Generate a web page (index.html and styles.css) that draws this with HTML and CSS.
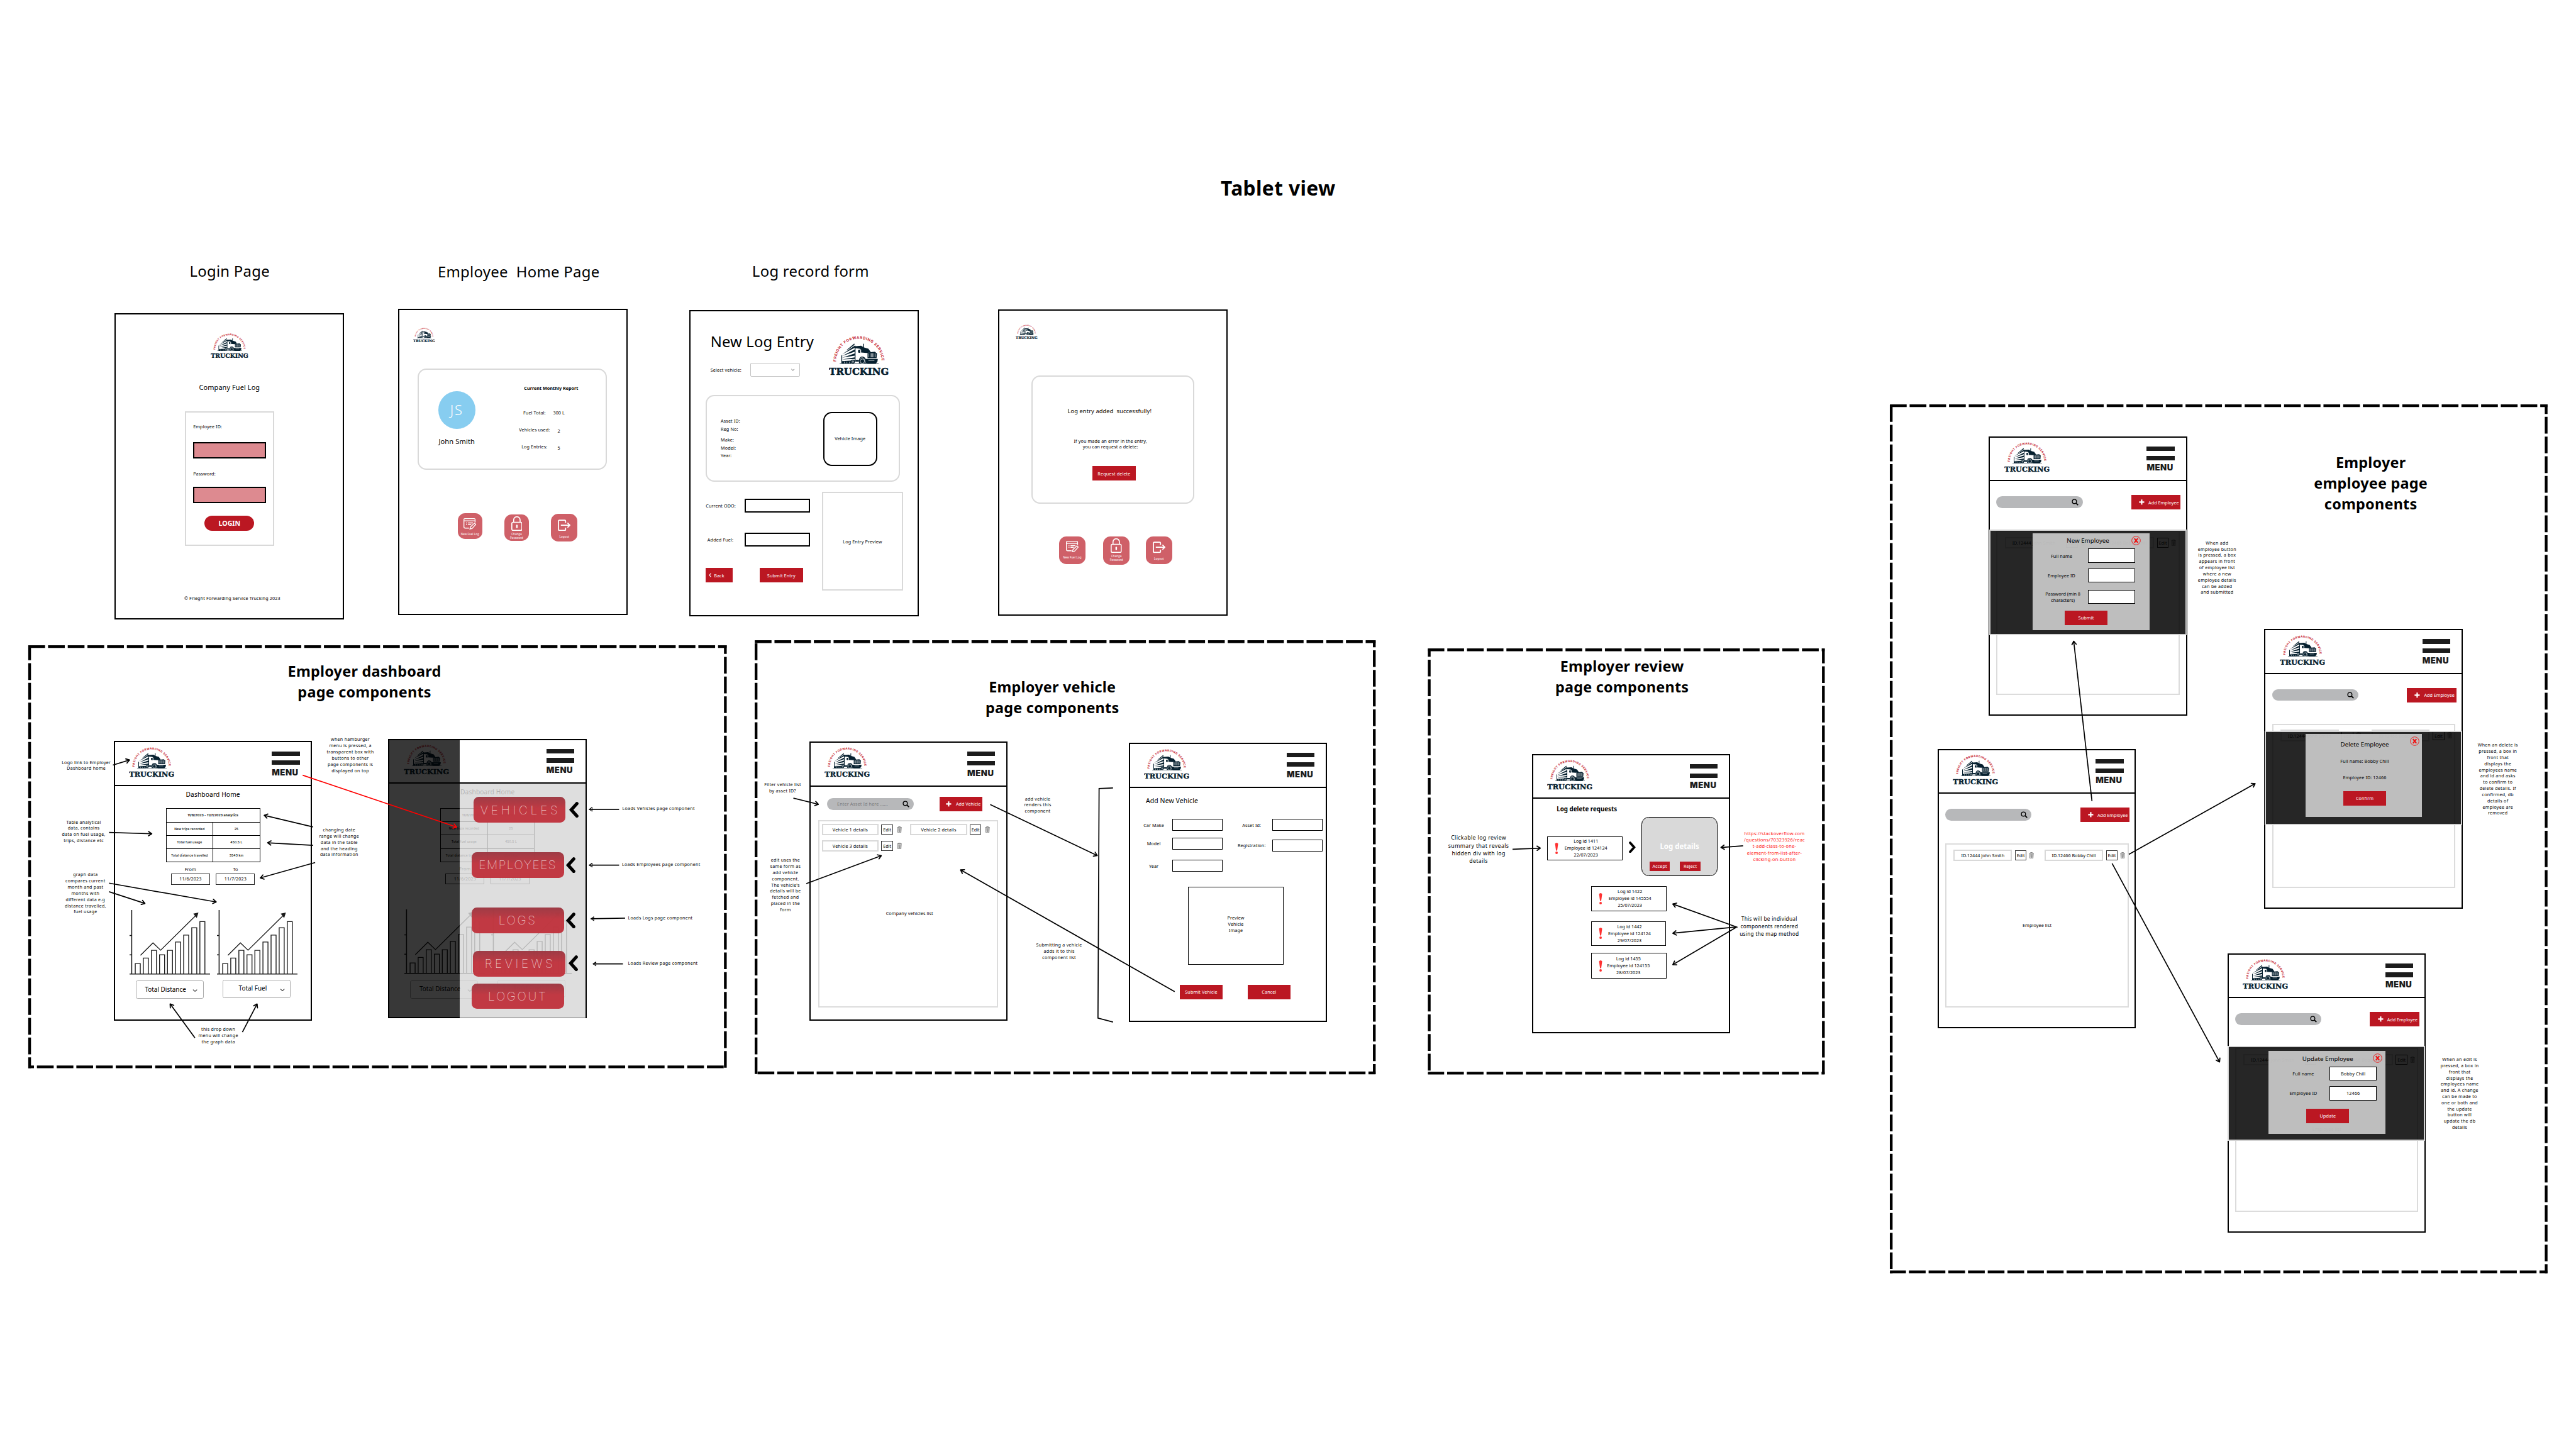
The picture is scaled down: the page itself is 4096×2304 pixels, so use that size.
FILE: index.html
```html
<!DOCTYPE html>
<html lang="en">
<head>
<meta charset="utf-8">
<title>Tablet view</title>
<link rel="stylesheet" href="styles.css">
</head>
<body>
<svg class="defs" aria-hidden="true">
  <symbol id="logo" viewBox="0 0 140 92">
    <path id="arc" d="M17 60 A53 53 0 0 1 123 60" fill="none"/>
    <text class="logo-arc" textLength="164"><textPath href="#arc" textLength="164">FREIGHT FORWARDING SERVICE</textPath></text>
    <g fill="#06202f">
      <path d="M29 46 L31 44 V64 H29Z M40 34 L59 18 L60 21 L46 31Z M31 43 L60 23 V28Z M31 47 L60 32 V37Z M31 51 L60 41 V46Z M31 55 L60 50 V54Z M31 59 L60 57 L58 60 L31 63Z"/>
      <path d="M60 23 H62 V60 H60Z M62 24 L75 23 L82 27 L92 30 L97 37 L78 35 L72 30 L62 29Z"/>
      <path d="M80 19 L82 18 V27 H80Z M68 33 L73 32 V40 L68 39Z M75 33 L93 34 L98 38 L88 40 L75 39Z"/>
      <path d="M90 39 L107 37 L112 41 L111 52 H90Z M84 54 H114 L113 60 L109 65 H90 L84 61Z"/>
      <path d="M62 56 H70 V60 H62Z M30 60 H52 V64 H30Z M25 64 H116 V65.3 H25Z"/>
      <path d="M70 64 Q69 49 77 48 Q87 48 89 64Z"/>
      <circle cx="56" cy="60" r="4.6"/>
    </g>
    <g fill="none" stroke="#fff" stroke-width="1">
      <path d="M93 41 V50 M96 40.5 V50 M99 40.5 V50 M102 40.5 V50 M105 40.5 V50 M108 41 V50 M36 60 V64 M42 60 V64 M48 60 V64"/>
      <circle cx="78" cy="59" r="5"/><circle cx="56" cy="60" r="2"/>
      <path d="M92 57.5 H106"/><path d="M73 53 Q78 48 83 55 L85 63"/>
    </g>
    <text class="logo-word" x="0.5" y="91" textLength="139" lengthAdjust="spacingAndGlyphs">TRUCKING</text>
  </symbol>
  <symbol id="search" viewBox="0 0 16 16"><circle cx="6.5" cy="6.5" r="4.9" fill="none" stroke="#000" stroke-width="2"/><path d="M10.2 10.2 L15 15" stroke="#000" stroke-width="2.6"/></symbol>
  <symbol id="plus" viewBox="0 0 14 14"><path d="M7 .5 V13.5 M.5 7 H13.5" stroke="#fff" stroke-width="3.4"/></symbol>
  <symbol id="trash" viewBox="0 0 12 15"><path d="M.3 2.6 H11.7 M4 2.4 V.8 H8 V2.4 M1.5 3.5 L2.4 14.3 H9.6 L10.5 3.5 M4.2 4 L4.6 13 M6 4 V13 M7.8 4 L7.4 13" fill="none" stroke="#222" stroke-width=".8"/></symbol>
  <symbol id="caret" viewBox="0 0 11 6"><path d="M.8 .8 L5.5 4.8 L10.2 .8" fill="none" stroke="#222" stroke-width="1.5"/></symbol>
  <symbol id="bang" viewBox="0 0 10 30"><path d="M1 3 Q5 -2 9 3 L6.5 21 H3.5Z" fill="#ff3131"/><circle cx="5" cy="26.5" r="3.2" fill="#ff3131"/></symbol>
  <symbol id="close" viewBox="0 0 22 22"><circle cx="11" cy="11" r="10" fill="none" stroke="#f01010" stroke-width="1.3"/><path d="M7 6 L15 16 M15 6 L7 16" stroke="#f01010" stroke-width="3"/></symbol>
  <symbol id="newlog" viewBox="0 0 30 27"><g fill="none" stroke="#fff" stroke-width="2"><path d="M13 23 H4 Q1 23 1 20 V3 Q1 1 3 1 H25 Q27 1 27 3 V10 M1 6 H27"/><path d="M6 11 H8 M10.5 11 H22 M6 15 H8 M10.5 15 H18"/><path d="M15 25 L16.5 20 L25.5 11.5 L28.5 14.5 L20 24Z"/></g></symbol>
  <symbol id="lock" viewBox="0 0 26 34"><rect x="1.2" y="14" width="23.6" height="18.8" rx="3" fill="none" stroke="#fff" stroke-width="2.4"/><path d="M5.5 14 V8.5 A7.5 7.5 0 0 1 20.5 8.5 V14" fill="none" stroke="#fff" stroke-width="2.4"/><rect x="11.2" y="19.5" width="3.6" height="8" rx="1.8" fill="#fff"/></symbol>
  <symbol id="logout" viewBox="0 0 30 27"><g fill="none" stroke="#fff" stroke-width="2.6"><path d="M18 8 V3.5 Q18 1.5 16 1.5 H4 Q1.5 1.5 1.5 4 V23 Q1.5 25.5 4 25.5 H16 Q18 25.5 18 23.5 V19"/><path d="M7 13.5 H28 M22.5 8 L28 13.5 L22.5 19"/></g></symbol>
  <symbol id="angle" viewBox="0 0 22 37"><path d="M18 4 L5 18.5 L18 33" fill="none" stroke="#000" stroke-width="7.5" stroke-linecap="round"/></symbol>
  <symbol id="chart" viewBox="0 0 188 151">
    <g fill="none" stroke="#1a1a1a" stroke-width="2.3">
      <path d="M5 0 V149 M0 149 H188 M0 59.3 H5 M0 104.3 H5"/>
      <path stroke-width="2" d="M13.3 149 V124.8 H25 V149 M32.1 149 V111.9 H43.8 V149 M51 149 V93.9 H62.7 V149 M69.9 149 V104.2 H81.6 V149 M88.3 149 V93.9 H100 V149 M107.1 149 V74.6 H118.8 V149 M126 149 V58.5 H137.7 V149 M144.9 149 V41.1 H156.6 V149 M163.8 149 V26.9 H175.5 V149"/>
      <path stroke-width="2" d="M25.5 105.5 L54.6 76.6 L72.4 93.6 L155 12"/>
    </g>
    <path d="M160.5 6 L148.5 8.6 L156.5 18.5Z" fill="#1a1a1a"/>
  </symbol>
</svg>

<main class="board">
  <h1 class="board-title">Tablet view</h1>
  <h2 class="page-title t-login">Login Page</h2>
  <h2 class="page-title t-home">Employee  Home Page</h2>
  <h2 class="page-title t-record">Log record form</h2>

  <section class="frame f-login">
    <svg class="logo"><use href="#logo"/></svg>
    <p class="app-name">Company Fuel Log</p>
    <form class="login-form">
      <label>Employee ID:</label><div class="field"></div>
      <label>Password:</label><div class="field"></div>
      <div class="login-btn">LOGIN</div>
    </form>
    <p class="copyright">© Frieght Forwarding Service Trucking 2023</p>
  </section>

  <section class="frame f-home">
    <svg class="logo"><use href="#logo"/></svg>
    <div class="card">
      <div class="person"><div class="avatar">JS</div><p>John Smith</p></div>
      <div class="report">
        <h3>Current Monthly Report</h3>
        <dl><dt>Fuel Total:</dt><dd>300 L</dd><dt>Vehicles used:</dt><dd class="low">2</dd><dt>Log Entries:</dt><dd class="low">5</dd></dl>
      </div>
    </div>
    <nav class="tiles">
      <div class="tile tile-new"><svg><use href="#newlog"/></svg>New Fuel Log</div>
      <div class="tile tile-lock"><svg><use href="#lock"/></svg>Change<br>Password</div>
      <div class="tile tile-out"><svg><use href="#logout"/></svg>Logout</div>
    </nav>
  </section>

  <section class="frame f-record">
    <div class="record-head">
      <div class="record-left">
        <h3>New Log Entry</h3>
        <div class="pick"><span>Select vehicle:</span><div class="select"><svg><use href="#caret"/></svg></div></div>
      </div>
      <svg class="logo"><use href="#logo"/></svg>
    </div>
    <div class="card">
      <ul><li>Asset ID:</li><li>Reg No:</li><li class="gap">Make:</li><li>Model:</li><li>Year:</li></ul>
      <div class="vehicle-image">Vehicle Image</div>
    </div>
    <div class="entry">
      <div class="entry-fields">
        <div class="entry-row"><span>Current ODO:</span><div class="box"></div></div>
        <div class="entry-row"><span>Added Fuel:</span><div class="box"></div></div>
        <div class="entry-actions"><div class="btn back"><svg viewBox="0 0 6 10"><path d="M5 .8 L1.5 5 L5 9.2" fill="none" stroke="#fff" stroke-width="1.7"/></svg>Back</div><div class="btn">Submit Entry</div></div>
      </div>
      <div class="entry-preview">Log Entry Preview</div>
    </div>
  </section>

  <section class="frame f-done">
    <svg class="logo"><use href="#logo"/></svg>
    <div class="card">
      <p class="done-msg">Log entry added  successfully!</p>
      <p class="done-note">If you made an error in the entry,<br>you can request a delete:</p>
      <div class="btn">Request delete</div>
    </div>
    <nav class="tiles">
      <div class="tile tile-new"><svg><use href="#newlog"/></svg>New Fuel Log</div>
      <div class="tile tile-lock"><svg><use href="#lock"/></svg>Change<br>Password</div>
      <div class="tile tile-out"><svg><use href="#logout"/></svg>Logout</div>
    </nav>
  </section>

  <h2 class="section-title s-dash">Employer dashboard<br>page components</h2>
  <h2 class="section-title s-vehicle">Employer vehicle<br>page components</h2>
  <h2 class="section-title s-review">Employer review<br>page components</h2>
  <h2 class="section-title s-employee">Employer<br>employee page<br>components</h2>

  <section class="device d-dash">
    <header><svg class="logo"><use href="#logo"/></svg><div class="menu"><i></i><i></i><b>MENU</b></div></header>
    <h3 class="dash-title">Dashboard Home</h3>
    <table><tr><th colspan="2">11/6/2023 - 11/7/2023 analytics</th></tr><tr><td>New trips recorded</td><td>25</td></tr><tr><td>Total fuel usage</td><td>450.5 L</td></tr><tr><td>Total distance travelled</td><td>3543 km</td></tr></table>
    <div class="dates"><div>From<span>11/6/2023</span></div><div>To<span>11/7/2023</span></div></div>
    <div class="charts"><svg><use href="#chart"/></svg><svg><use href="#chart"/></svg></div>
    <div class="drops"><div>Total Distance<svg><use href="#caret"/></svg></div><div>Total Fuel<svg><use href="#caret"/></svg></div></div>
  </section>

  <section class="device d-open">
    <header><svg class="logo"><use href="#logo"/></svg><div class="menu"><i></i><i></i><b>MENU</b></div></header>
    <h3 class="dash-title">Dashboard Home</h3>
    <table><tr><th colspan="2">11/6/2023 - 11/7/2023 analytics</th></tr><tr><td>New trips recorded</td><td>25</td></tr><tr><td>Total fuel usage</td><td>450.5 L</td></tr><tr><td>Total distance travelled</td><td>3543 km</td></tr></table>
    <div class="dates"><div>From<span>11/6/2023</span></div><div>To<span>11/7/2023</span></div></div>
    <div class="charts"><svg><use href="#chart"/></svg><svg><use href="#chart"/></svg></div>
    <div class="drops"><div>Total Distance<svg><use href="#caret"/></svg></div><div>Total Fuel<svg><use href="#caret"/></svg></div></div>
    <div class="shade"></div>
    <nav class="drawer">
      <div class="link l-veh"><span>VEHICLES</span><svg><use href="#angle"/></svg></div>
      <div class="link l-emp"><span>EMPLOYEES</span><svg><use href="#angle"/></svg></div>
      <div class="link l-logs"><span>LOGS</span><svg><use href="#angle"/></svg></div>
      <div class="link l-rev"><span>REVIEWS</span><svg><use href="#angle"/></svg></div>
      <div class="link l-out"><span>LOGOUT</span></div>
    </nav>
  </section>

  <section class="device d-list">
    <header><svg class="logo"><use href="#logo"/></svg><div class="menu"><i></i><i></i><b>MENU</b></div></header>
    <div class="toolbar"><div class="search"><span>Enter Asset Id here ......</span><svg><use href="#search"/></svg></div><div class="add"><svg><use href="#plus"/></svg>Add Vehicle</div></div>
    <div class="list">
      <div class="rows">
        <div class="item"><span>Vehicle 1 details</span><em>Edit</em><svg><use href="#trash"/></svg></div>
        <div class="item"><span>Vehicle 2 details</span><em>Edit</em><svg><use href="#trash"/></svg></div>
        <div class="item"><span>Vehicle 3 details</span><em>Edit</em><svg><use href="#trash"/></svg></div>
      </div>
      <p>Company vehicles list</p>
    </div>
  </section>

  <section class="device d-form">
    <header><svg class="logo"><use href="#logo"/></svg><div class="menu"><i></i><i></i><b>MENU</b></div></header>
    <h3>Add New Vehicle</h3>
    <div class="columns">
      <div class="col"><div><span>Car Make</span><i></i></div><div><span>Model</span><i></i></div><div class="year"><span>Year</span><i></i></div></div>
      <div class="col right"><div><span>Asset Id:</span><i></i></div><div><span>Registration:</span><i></i></div></div>
    </div>
    <div class="photo">Preview<br>Vehicle<br>Image</div>
    <div class="form-actions"><div class="btn">Submit Vehicle</div><div class="btn">Cancel</div></div>
  </section>

  <section class="device d-review">
    <header><svg class="logo"><use href="#logo"/></svg><div class="menu"><i></i><i></i><b>MENU</b></div></header>
    <h3>Log delete requests</h3>
    <div class="opened">
      <div class="log"><svg><use href="#bang"/></svg><p>Log id 1411<br>Employee id 124124<br>22/07/2023</p></div>
      <svg class="next"><use href="#angle"/></svg>
      <div class="details"><b>Log details</b><div><span class="btn">Accept</span><span class="btn">Reject</span></div></div>
    </div>
    <div class="logs">
      <div class="log"><svg><use href="#bang"/></svg><p>Log id 1422<br>Employee id 145554<br>25/07/2023</p></div>
      <div class="log"><svg><use href="#bang"/></svg><p>Log id 1442<br>Employee id 124124<br>29/07/2023</p></div>
      <div class="log"><svg><use href="#bang"/></svg><p>Log id 1455<br>Employee id 124155<br>28/07/2023</p></div>
    </div>
  </section>

  <section class="device staff d-new">
    <header><svg class="logo"><use href="#logo"/></svg><div class="menu"><i></i><i></i><b>MENU</b></div></header>
    <div class="toolbar"><div class="search"><svg><use href="#search"/></svg></div><div class="add"><svg><use href="#plus"/></svg>Add Employee</div></div>
    <div class="list">
      <div class="rows">
        <div class="item"><span>ID.12444 John Smith</span><em>Edit</em><svg><use href="#trash"/></svg></div>
        <div class="item"><span>ID.12466 Bobby Chill</span><em>Edit</em><svg><use href="#trash"/></svg></div>
      </div>
    </div>
    <div class="overlay">
      <div class="modal">
        <svg class="close"><use href="#close"/></svg>
        <h4>New Employee</h4>
        <div class="mrow"><span>Full name</span><i></i></div>
        <div class="mrow"><span>Employee ID</span><i></i></div>
        <div class="mrow"><span>Password (min 8 characters)</span><i></i></div>
        <div class="btn">Submit</div>
      </div>
    </div>
  </section>

  <section class="device staff d-staff">
    <header><svg class="logo"><use href="#logo"/></svg><div class="menu"><i></i><i></i><b>MENU</b></div></header>
    <div class="toolbar"><div class="search"><svg><use href="#search"/></svg></div><div class="add"><svg><use href="#plus"/></svg>Add Employee</div></div>
    <div class="list">
      <div class="rows">
        <div class="item"><span>ID.12444 John Smith</span><em>Edit</em><svg><use href="#trash"/></svg></div>
        <div class="item"><span>ID.12466 Bobby Chill</span><em>Edit</em><svg><use href="#trash"/></svg></div>
      </div>
      <p>Employee list</p>
    </div>
  </section>

  <section class="device staff d-delete">
    <header><svg class="logo"><use href="#logo"/></svg><div class="menu"><i></i><i></i><b>MENU</b></div></header>
    <div class="toolbar"><div class="search"><svg><use href="#search"/></svg></div><div class="add"><svg><use href="#plus"/></svg>Add Employee</div></div>
    <div class="list">
      <div class="rows">
        <div class="item"><span>ID.12444 John Smith</span><em>Edit</em><svg><use href="#trash"/></svg></div>
        <div class="item"><span>ID.12466 Bobby Chill</span><em>Edit</em><svg><use href="#trash"/></svg></div>
      </div>
    </div>
    <div class="overlay">
      <div class="modal">
        <svg class="close"><use href="#close"/></svg>
        <h4>Delete Employee</h4>
        <p>Full name: Bobby Chill</p>
        <p>Employee ID: 12466</p>
        <div class="btn">Confirm</div>
      </div>
    </div>
  </section>

  <section class="device staff d-update">
    <header><svg class="logo"><use href="#logo"/></svg><div class="menu"><i></i><i></i><b>MENU</b></div></header>
    <div class="toolbar"><div class="search"><svg><use href="#search"/></svg></div><div class="add"><svg><use href="#plus"/></svg>Add Employee</div></div>
    <div class="list">
      <div class="rows">
        <div class="item"><span>ID.12444 John Smith</span><em>Edit</em><svg><use href="#trash"/></svg></div>
        <div class="item"><span>ID.12466 Bobby Chill</span><em>Edit</em><svg><use href="#trash"/></svg></div>
      </div>
      <p>Employee list</p>
    </div>
    <div class="overlay">
      <div class="modal">
        <svg class="close"><use href="#close"/></svg>
        <h4>Update Employee</h4>
        <div class="mrow"><span>Full name</span><i>Bobby Chill</i></div>
        <div class="mrow"><span>Employee ID</span><i>12466</i></div>
        <div class="btn">Update</div>
      </div>
    </div>
  </section>

  <p class="note n-logo">Logo link to Employer<br>Dashboard home</p>
  <p class="note n-table">Table analytical<br>data, contains<br>data on fuel usage,<br>trips, distance etc</p>
  <p class="note n-graph">graph data<br>compares current<br>month and past<br>months with<br>different data e.g<br>distance travelled,<br>fuel usage</p>
  <p class="note n-range">changing date<br>range will change<br>data in the table<br>and the heading<br>data information</p>
  <p class="note n-burger">when hamburger<br>menu is pressed, a<br>transparent box with<br>buttons to other<br>page components is<br>displayed on top</p>
  <p class="note n-drop">this drop down<br>menu will change<br>the graph data</p>
  <p class="note n-lveh">Loads Vehicles page component</p>
  <p class="note n-lemp">Loads Employees page component</p>
  <p class="note n-llog">Loads Logs page component</p>
  <p class="note n-lrev">Loads Review page component</p>
  <p class="note n-filter">Filter vehicle list<br>by asset ID?</p>
  <p class="note n-edit">edit uses the<br>same form as<br>add vehicle<br>component.<br>The vehicle's<br>details will be<br>fetched and<br>placed in the<br>form</p>
  <p class="note n-add">add vehicle<br>renders this<br>component</p>
  <p class="note n-submit">Submitting a vehicle<br>adds it to this<br>component list</p>
  <p class="note n-click">Clickable log review<br>summary that reveals<br>hidden div with log<br>details</p>
  <p class="note n-map">This will be individual<br>components rendered<br>using the map method</p>
  <p class="note n-link">https://stackoverflow.com<br>/questions/70323926/reac<br>t-add-class-to-one-<br>element-from-list-after-<br>clicking-on-button</p>
  <p class="note n-new">When add<br>employee button<br>is pressed, a box<br>appears in front<br>of employee list<br>where a new<br>employee details<br>can be added<br>and submitted</p>
  <p class="note n-delete">When an delete is<br>pressed, a box in<br>front that<br>displays the<br>employees name<br>and id and asks<br>to confirm to<br>delete details. If<br>confirmed, db<br>details of<br>employee are<br>removed</p>
  <p class="note n-update">When an edit is<br>pressed, a box in<br>front that<br>displays the<br>employees name<br>and id. A change<br>can be made to<br>one or both and<br>the update<br>button will<br>update the db<br>details</p>

  <svg class="ink" viewBox="0 0 6000 3375">
    <defs>
      <marker id="head" markerUnits="userSpaceOnUse" markerWidth="16" markerHeight="16" viewBox="-12 -8 16 16" orient="auto"><path d="M-8 -5 L-.5 0 L-8 5" fill="none" stroke="#000" stroke-width="2.6" stroke-linecap="round" stroke-linejoin="round"/></marker>
      <marker id="head-red" markerUnits="userSpaceOnUse" markerWidth="16" markerHeight="16" viewBox="-12 -8 16 16" orient="auto"><path d="M-8 -5 L-.5 0 L-8 5" fill="none" stroke="#f00" stroke-width="2.6" stroke-linecap="round" stroke-linejoin="round"/></marker>
      <marker id="head-solid" markerUnits="userSpaceOnUse" markerWidth="16" markerHeight="16" viewBox="-12 -8 16 16" orient="auto"><path d="M-7 -4.5 L-.5 0 L-7 4.5Z" stroke="#000" stroke-width="1.5" stroke-linejoin="round"/></marker>
    </defs>
    <g class="dashes">
      <path d="M66 1506 H1692.5"/><path d="M69 1503 V2488" stroke-dashoffset="4.2"/><path d="M1689.5 1503 V2488" stroke-dashoffset="18.9"/><path d="M66 2485 H1692.5" stroke-dashoffset="25.9"/>
      <path d="M1758 1494.5 H3204"/><path d="M1761 1498.7 V2502"/><path d="M3201 1491.5 V2502" stroke-dashoffset="22.9"/><path d="M1764.5 2499 H3204"/>
      <path d="M3326 1513.5 H4250" stroke-dashoffset=".9"/><path d="M3329 1510.5 V2502" stroke-dashoffset="19.9"/><path d="M4247 1510.5 V2502" stroke-dashoffset="4.4"/><path d="M3326 2499.5 H4250" stroke-dashoffset="1.3"/>
      <path d="M4402 945 H5933.5"/><path d="M4405 942 V2965.5" stroke-dashoffset="-1.5"/><path d="M5930.5 942 V2965.5" stroke-dashoffset="16.9"/><path d="M4402 2962.5 H5933.5" stroke-dashoffset="1.7"/>
    </g>
    <g class="arrows">
      <path d="M263 1782 L302 1770"/><path d="M254 1939 L354 1942"/><path d="M254 2057 L504 2101"/><path d="M254 2077 L338 2104.5"/>
      <path d="M729 1926 L615 1899"/><path d="M729 1969 L623 1963"/><path d="M734 2009 L606 2045"/><path d="M454 2417.5 L396 2338"/><path d="M564.6 2404 L599 2338"/>
      <path d="M1848 1859 L1906.6 1873.5"/><path d="M1878 2058 L2053 1993"/><path d="M2306.4 1874 L2556 1993"/><path d="M2736 2309.7 L2237 2026"/>
      <path d="M3523 1978 L3588 1975.4"/><path d="M4060 1970 L4008 1974"/><path d="M4047 2160 L3896 2105.5"/><path d="M4045 2159 L3896 2173.7"/><path d="M4044 2160 L3896 2247"/>
      <path d="M4872.6 1866 L4830 1493"/><path d="M4958.5 1990 L5253 1825"/><path d="M4919.5 2011 L5170 2474"/>
    </g>
    <g class="arrows solid"><path d="M1442 1885 H1372"/><path d="M1442 2015 H1372"/><path d="M1456 2138.6 L1376 2140"/><path d="M1451 2245 H1381"/></g>
    <path class="bracket" d="M2592.5 1835.4 L2560 1836.7 L2557.4 2371.4 L2592.5 2380.6"/>
    <path class="red-arrow" d="M705 1805.6 L1064 1926.7"/>
  </svg>
</main>
</body>
</html>
```
FILE: styles.css
```css
* { box-sizing: border-box; margin: 0; padding: 0; }
html, body { background: #fff; overflow: hidden; }
body { width: 4096px; height: 2304px; }

.board {
  position: relative; width: 6000px; height: 3375px; zoom: .6826667;
  font-family: "Noto Sans", sans-serif; font-size: 10.6px; line-height: 1.4;
  letter-spacing: .015em; color: #000;
}
h1, h2, h3, h4 { font-weight: 400; }
i, em { font-style: normal; }
ul { list-style: none; }
svg { display: block; flex: none; }
.defs { display: none; }

.logo-arc { font: 700 8.6px "Inter", sans-serif; fill: #c4182b; letter-spacing: 0; }
.logo-word { font: 700 22.8px "DejaVu Serif", serif; fill: #06202f; stroke: #06202f; stroke-width: .8px; letter-spacing: 0; }

.btn {
  display: flex; align-items: center; justify-content: center;
  width: 100px; height: 34px; background: #bb1722; color: #fff; font-size: 10.6px;
}

/* headings on the canvas */
.board-title, .page-title, .section-title { position: absolute; text-align: center; white-space: pre; }
.board-title { left: 2677px; top: 406px; width: 600px; font-size: 46.5px; font-weight: 700; letter-spacing: .012em; }
.page-title { width: 500px; font-size: 35px; letter-spacing: .012em; }
.t-login { left: 285px; top: 607px; }
.t-home { left: 958px; top: 608px; }
.t-record { left: 1638px; top: 606px; }
.section-title { width: 600px; font-size: 34.3px; font-weight: 700; line-height: 48.6px; letter-spacing: .01em; }
.s-dash { left: 549px; top: 1539px; }
.s-vehicle { left: 2151px; top: 1576px; }
.s-review { left: 3478px; top: 1528px; }
.s-employee { left: 5222px; top: 1053px; }

/* employee screens */
.frame { position: absolute; width: 535px; height: 713px; border: 3px solid #000; background: #fff; display: flex; flex-direction: column; }
.f-login { left: 267px; top: 730px; align-items: center; }
.f-home { left: 927px; top: 719px; }
.f-record { left: 1605px; top: 722px; }
.f-done { left: 2325px; top: 721px; }
.card { border: 3px solid #d9d9d9; border-radius: 20px; }

.f-login .logo { width: 88px; height: 58px; margin-top: 43px; }
.app-name { font-size: 16px; margin-top: 56px; }
.login-form { width: 207px; height: 314px; margin-top: 45px; padding: 26px 16px 0; border: 3px solid #d9d9d9; display: flex; flex-direction: column; }
.login-form .field { height: 38px; border: 3px solid #000; background: #dd8a90; margin: 28.5px 0 28px; }
.login-form .field + label + .field { margin: 23.5px 0 29.5px; }
.login-btn { width: 116px; height: 35px; border-radius: 18px; background: #bb1722; color: #fff; font-size: 15.6px; font-weight: 700; letter-spacing: 0; align-self: center; display: flex; align-items: center; justify-content: center; }
.copyright { margin-top: 115px; padding-left: 13px; font-size: 10.6px; }

.f-home .logo { width: 51px; height: 34px; margin: 41px 0 0 32px; }
.f-home .card { width: 442px; height: 237px; margin: 61px 0 0 42px; display: flex; }
.person { width: 86px; margin: 51px 0 0 46px; text-align: center; font-size: 16.3px; white-space: nowrap; }
.avatar { width: 86px; height: 87px; border-radius: 50%; background: #87cdf0; color: #fff; font-size: 32px; font-weight: 300; letter-spacing: .08em; display: flex; align-items: center; justify-content: center; margin-bottom: 18px; }
.report { width: 158px; margin: 35.5px 0 0 98px; }
.report h3 { font-size: 10.6px; font-weight: 700; text-align: center; white-space: nowrap; letter-spacing: 0; }
.report dl { display: grid; grid-template-columns: 80px 34px; grid-auto-rows: 40px; margin-top: 42px; text-align: center; }
.low { padding-top: 3px; }

.tiles { display: flex; align-items: flex-start; }
.tile { background: #cf6068; color: #fff; border-radius: 17px; font-size: 6.5px; line-height: 8.8px; text-align: center; white-space: nowrap; display: flex; flex-direction: column; align-items: center; }
.tile svg { width: 30px; height: 27px; margin: 11px 0 6px; }
.tile-lock svg { width: 26px; height: 34px; margin: 4px 0 2px; }
.tile-out svg { margin: 13px 0 8px; }
.f-home .tiles { margin: 101px 0 0 136.5px; gap: 52px; }
.f-home .tile-new { width: 56.5px; height: 60px; }
.f-home .tile-lock { width: 57px; height: 61px; margin-top: 3px; }
.f-home .tile-out { width: 61px; height: 65px; margin-top: 1px; }

.record-head { display: flex; height: 153px; padding-left: 47px; }
.record-left { width: 276px; }
.record-left h3 { font-size: 35px; line-height: 49px; margin-top: 46px; letter-spacing: .005em; white-space: nowrap; }
.record-head .logo { width: 140px; height: 92px; margin-top: 57px; }
.pick { display: flex; align-items: center; margin-top: 26px; }
.pick span { width: 92px; }
.select { width: 116px; height: 32px; border: 1.5px solid #c4c4c4; border-radius: 3px; display: flex; align-items: center; justify-content: flex-end; padding-right: 10px; }
.select svg { width: 8px; height: 6px; }
.f-record .card { width: 452px; height: 202px; margin: 42px 0 0 36px; display: flex; justify-content: space-between; padding: 36px 50px 0 32px; }
.f-record li { line-height: 18px; }
.f-record ul { margin-top: 13px; }
.f-record .gap { margin-top: 8px; }
.vehicle-image { width: 126px; height: 126px; border: 3px solid #000; border-radius: 20px; display: flex; align-items: center; justify-content: center; }
.entry { display: flex; margin: 24px 0 0 36px; }
.entry-fields { width: 271px; padding-top: 16px; }
.entry-row { display: flex; align-items: center; margin-bottom: 47px; }
.entry-row span { width: 68px; margin-right: 22px; text-align: center; white-space: nowrap; }
.box { width: 153px; height: 32px; border: 3px solid #000; }
.entry-actions { display: flex; gap: 64px; margin-top: 50px; }
.entry-actions .back { width: 62px; gap: 6px; padding-right: 12px; }
.back svg { width: 6px; height: 10px; }
.entry-row + .entry-row { margin-bottom: 0; }
.entry-preview { width: 188px; height: 229px; border: 3px solid #d9d9d9; display: flex; align-items: center; justify-content: center; padding-top: 2px; }

.f-done .logo { width: 51px; height: 34px; margin: 32px 0 0 38px; }
.f-done .card { width: 379px; height: 298px; margin: 85px 0 0 75px; display: flex; flex-direction: column; align-items: center; padding-right: 12px; }
.done-msg { font-size: 13.6px; white-space: pre; margin-top: 70px; padding-right: 4px; }
.done-note { line-height: 14px; margin: 54px 0 37px; text-align: center; }
.f-done .card .btn { margin-left: 17px; }
.f-done .tiles { margin: 76px 0 0 139px; }
.f-done .tile { width: 61px; height: 65px; }
.f-done .tile-lock { margin: 1px 38px 0 42px; }

/* employer screens */
.device { position: absolute; width: 462px; height: 651px; border: 3px solid #000; background: #fff; }
.device > header { height: 102px; border-bottom: 3px solid #000; display: flex; justify-content: space-between; padding: 11px 26px 0 33px; }
.device > header .logo { width: 106px; height: 70px; }
.menu { width: 65px; margin-top: 10px; }
.menu i { display: block; height: 10.5px; background: #1c1c1c; margin-bottom: 11px; }
.menu b { display: block; font: 900 19.3px/14px "Inter", sans-serif; color: #1c1c1c; letter-spacing: .04em; white-space: nowrap; }
.d-dash { left: 265px; top: 1726px; }
.d-open { left: 904.5px; top: 1720.5px; }
.d-list { left: 1885px; top: 1727px; }
.d-form { left: 2629px; top: 1730px; }
.d-review { left: 3568px; top: 1756px; }
.d-new { left: 4632px; top: 1016px; }
.d-staff { left: 4513px; top: 1744px; }
.d-delete { left: 5274px; top: 1465px; }
.d-update { left: 5188px; top: 2220px; }

.dash-title { font-size: 15px; line-height: 21px; margin-top: 9px; text-align: center; }
table { width: 220px; margin: 22px auto 0; border-collapse: collapse; table-layout: fixed; font: 500 7.4px "Inter", sans-serif; text-align: center; }
.d-open table { margin-top: 27px; }
tr { height: 31px; }
td, th { border: 1.5px solid #000; }
th { font-weight: 700; }
.dates { display: flex; justify-content: center; gap: 14px; margin-top: 10px; text-align: center; line-height: 14px; }
.dates span { display: flex; align-items: center; justify-content: center; width: 91px; height: 25px; margin-top: 3px; border: 1.5px solid #222; }
.charts { display: flex; gap: 15px; padding-left: 34px; margin-top: 59px; }
.charts svg { width: 188px; height: 151px; }
.drops { display: flex; gap: 45px; padding-left: 48px; margin-top: 14px; }
.drops div { width: 158px; height: 42px; border: 1.5px solid #aaa; border-radius: 4px; font-size: 14.6px; display: flex; align-items: center; justify-content: flex-end; gap: 15px; padding-right: 12px; white-space: nowrap; letter-spacing: 0; }
.drops div + div { margin-top: -2px; gap: 30px; }
.drops svg { width: 12px; height: 6px; margin-top: 5px; }

.shade { position: absolute; left: 0; top: 0; width: 163px; height: 645px; background: rgba(0, 0, 0, .78); }
.drawer { position: absolute; left: 163px; top: 102px; width: 293px; height: 546px; background: rgba(215, 215, 215, .83); padding: 31px 0 0 28px; }
.link { display: flex; align-items: center; gap: 8px; }
.link span { width: 215px; height: 60px; border-radius: 12px; background: linear-gradient(#9b3640, #c0333d 45%); opacity: .96; color: #fff; font: 100 28px "Inter", sans-serif; letter-spacing: .08em; display: flex; align-items: center; justify-content: center; }
.link svg { width: 22px; height: 37px; }
.l-veh { margin-left: 4px; }
.l-veh span { letter-spacing: .25em; padding-left: 5px; }
.l-emp { margin-top: 68px; gap: 5px; }
.l-logs { margin-top: 69px; gap: 5px; }
.l-logs span, .l-out span { letter-spacing: .14em; }
.l-rev { margin: 41px 0 0 3px; }
.l-rev span { letter-spacing: .24em; padding-left: 5px; }
.l-out { margin-top: 16px; }

.toolbar { display: flex; justify-content: space-between; align-items: center; height: 34px; margin-top: 24px; padding: 0 56px 0 39px; }
.search { width: 201px; height: 27px; border-radius: 14px; background: #b7b8ba; color: #77787a; display: flex; align-items: center; padding: 0 10px 0 23px; }
.search svg { width: 16px; height: 16px; margin-left: auto; }
.add { width: 100px; height: 34px; background: #bb1722; color: #fff; display: flex; align-items: center; justify-content: flex-end; gap: 10px; padding-right: 4px; white-space: nowrap; font-size: 10.6px; letter-spacing: 0; }
.add svg { width: 13px; height: 13px; }
.list { width: 419px; height: 437px; margin: 20px 0 0 18.5px; border: 3px solid #dcdcdc; padding: 6px 0 0 5px; }
.rows { display: flex; flex-wrap: wrap; column-gap: 20px; row-gap: 11px; }
.item { display: flex; align-items: center; }
.item span { width: 132px; height: 27px; border: 3px solid #d9d9d9; display: flex; align-items: center; justify-content: center; white-space: nowrap; }
.item em { width: 27px; height: 22.5px; margin: 0 8.5px 0 6.5px; border: 1.5px solid #333; display: flex; align-items: center; justify-content: center; letter-spacing: 0; }
.item svg { width: 12px; height: 15px; }
.list p { text-align: center; margin-top: 136px; }

.staff .toolbar { margin-top: 32px; padding: 0 12px 0 15px; }
.staff .add { width: 115px; gap: 9px; }
.staff .list { width: 427px; height: 382px; margin: 50px 0 0 15px; padding: 11px 0 0 16.5px; }
.staff .rows { column-gap: 24px; }
.staff .item span { width: 136px; letter-spacing: 0; }
.staff .item em { margin: 0 6px 0 7px; }
.staff .list p { margin-top: 141px; padding-right: 16px; }

.d-form h3 { font-size: 15.3px; margin: 20px 0 0 37px; }
.columns { display: flex; margin: 31px 0 0 13px; }
.col { width: 215px; }
.col.right { margin-left: 8px; }
.col div { display: flex; align-items: center; margin-bottom: 15.5px; }
.col.right div { margin-bottom: 20px; }
.col .year { margin: 24px 0 0; }
.col span { width: 85px; text-align: center; }
.col.right span { width: 95px; }
.col i { width: 118px; height: 28px; border: 1.5px solid #000; flex: none; }
.photo { width: 224px; height: 182px; margin: 35px 0 46px 134.5px; border: 1.5px solid #000; text-align: center; line-height: 14.5px; display: flex; flex-direction: column; justify-content: center; padding-bottom: 6px; }
.form-actions { display: flex; gap: 58px; margin-left: 116px; }

.d-review h3 { font-size: 14.3px; font-weight: 700; margin: 14px 0 8px 55px; letter-spacing: 0; }
.opened { display: flex; align-items: flex-start; margin-left: 32px; }
.log { width: 176px; height: 58px; border: 1.5px solid #000; display: flex; align-items: center; padding: 0 20px 0 16px; }
.log svg { width: 9px; height: 29px; }
.log p { flex: 1; text-align: center; line-height: 16px; white-space: nowrap; letter-spacing: 0; }
.opened .log { margin-top: 45px; height: 56px; width: 177px; }
.opened .next { width: 16px; height: 27px; transform: scaleX(-1); margin: 57px 14px 0; }
.details { width: 176px; height: 137px; border: 1.5px solid #000; border-radius: 17px; background: #d9d9d9; color: #fff; padding: 56px 0 0 17px; }
.details b { display: block; font-size: 16.8px; line-height: 24px; letter-spacing: 0; padding-left: 24px; }
.details div { display: flex; gap: 24px; margin-top: 23px; }
.details .btn { width: 47px; height: 21px; }
.logs { margin: 24px 0 0 135px; }
.logs .log { margin-bottom: 23.5px; }
.logs .log + .log { margin-bottom: 16px; width: 174px; }
.logs .log + .log + .log { width: 176px; height: 60px; padding-right: 27px; }

/* pop-ups over the staff list */
.overlay { position: absolute; left: -2px; top: 215px; width: 460px; height: 245px; border: 3px solid #d3d3d3; background: rgba(0, 0, 0, .85); background-clip: padding-box; }
.modal { position: relative; width: 272px; height: 226px; margin: 5px 0 0 99px; background: rgba(217, 217, 217, .85); text-align: center; }
.modal h4 { font-size: 14.3px; line-height: 20px; padding: 7px 15px 0 0; letter-spacing: 0; }
.close { position: absolute; left: 229px; top: 6px; width: 22px; height: 22px; }
.mrow { display: flex; align-items: center; margin: 9px 0 13px; }
.mrow span { width: 110px; margin: 0 6px 0 12px; padding: 0 10px; line-height: 14.8px; flex: none; }
.mrow i { width: 110px; height: 33px; border: 1.5px solid #000; background: #fff; display: flex; align-items: center; justify-content: center; }
.mrow + .mrow { margin: 0 0 17px; }
.mrow + .mrow + .mrow span { margin: 0 0 0 12px; padding: 0 12px; width: 116px; letter-spacing: 0; }
.modal .btn { margin: -1px 0 0 74px; height: 33px; }
.d-delete .overlay { top: 234px; height: 220px; }
.d-delete .modal { margin-left: 92px; height: 193px; }
.d-delete h4 { padding: 14px 0 0 4px; }
.d-delete .close, .d-update .close { left: 243px; }
.d-delete .modal p { margin: 21px 0 0 4px; }
.d-delete .modal p + p { margin-top: 23.5px; }
.d-delete .modal .btn { margin: 25px 0 0 88px; }
.d-update .overlay { top: 213.5px; height: 221px; }
.d-update .modal { margin: 8.5px 0 0 92px; height: 194px; }
.d-update h4 { padding: 9px 0 0 4px; }
.d-update .mrow { margin: 7px 0 13px; }
.d-update .mrow + .mrow { margin: 0; }
.d-update .mrow span { margin: 0 6px 0 26px; }
.d-update .modal .btn { margin: 20px 0 0 88px; }

/* notes */
.note { position: absolute; width: 200px; text-align: center; font-size: 10.4px; line-height: 14.4px; letter-spacing: .04em; white-space: nowrap; }
.n-logo { left: 101px; top: 1769px; }
.n-table { left: 95px; top: 1908px; }
.n-graph { left: 99px; top: 2031px; }
.n-range { left: 690px; top: 1926.5px; }
.n-burger { left: 716px; top: 1716px; }
.n-drop { left: 408.5px; top: 2391px; }
.n-lveh { left: 1434px; top: 1877px; }
.n-lemp { left: 1440px; top: 2007px; }
.n-llog { left: 1438px; top: 2131px; }
.n-lrev { left: 1444px; top: 2237px; }
.n-filter { left: 1723px; top: 1821px; }
.n-edit { left: 1729.5px; top: 1997px; }
.n-add { left: 2317px; top: 1854px; }
.n-submit { left: 2367px; top: 2195px; }
.n-click { left: 3344px; top: 1943px; font-size: 12.9px; line-height: 18px; }
.n-map { left: 4021px; top: 2132px; font-size: 12.2px; line-height: 17px; letter-spacing: .03em; }
.n-link { left: 4033px; top: 1933px; font-size: 10.9px; line-height: 15.2px; color: #ff1616; letter-spacing: .03em; }
.n-new { left: 5064px; top: 1258px; }
.n-delete { left: 5718px; top: 1729px; }
.n-update { left: 5629px; top: 2461px; }

/* dashed section borders and connectors */
.ink { position: absolute; left: 0; top: 0; width: 6000px; height: 3375px; fill: none; }
.dashes path { stroke: #000; stroke-width: 6.4px; stroke-dasharray: 39 6.9; }
.arrows path { stroke: #000; stroke-width: 2.5px; marker-end: url(#head); }
.solid path { marker-end: url(#head-solid); }
.bracket { stroke: #000; stroke-width: 2.5px; }
.red-arrow { stroke: #f00; stroke-width: 2.4px; marker-end: url(#head-red); }
```
